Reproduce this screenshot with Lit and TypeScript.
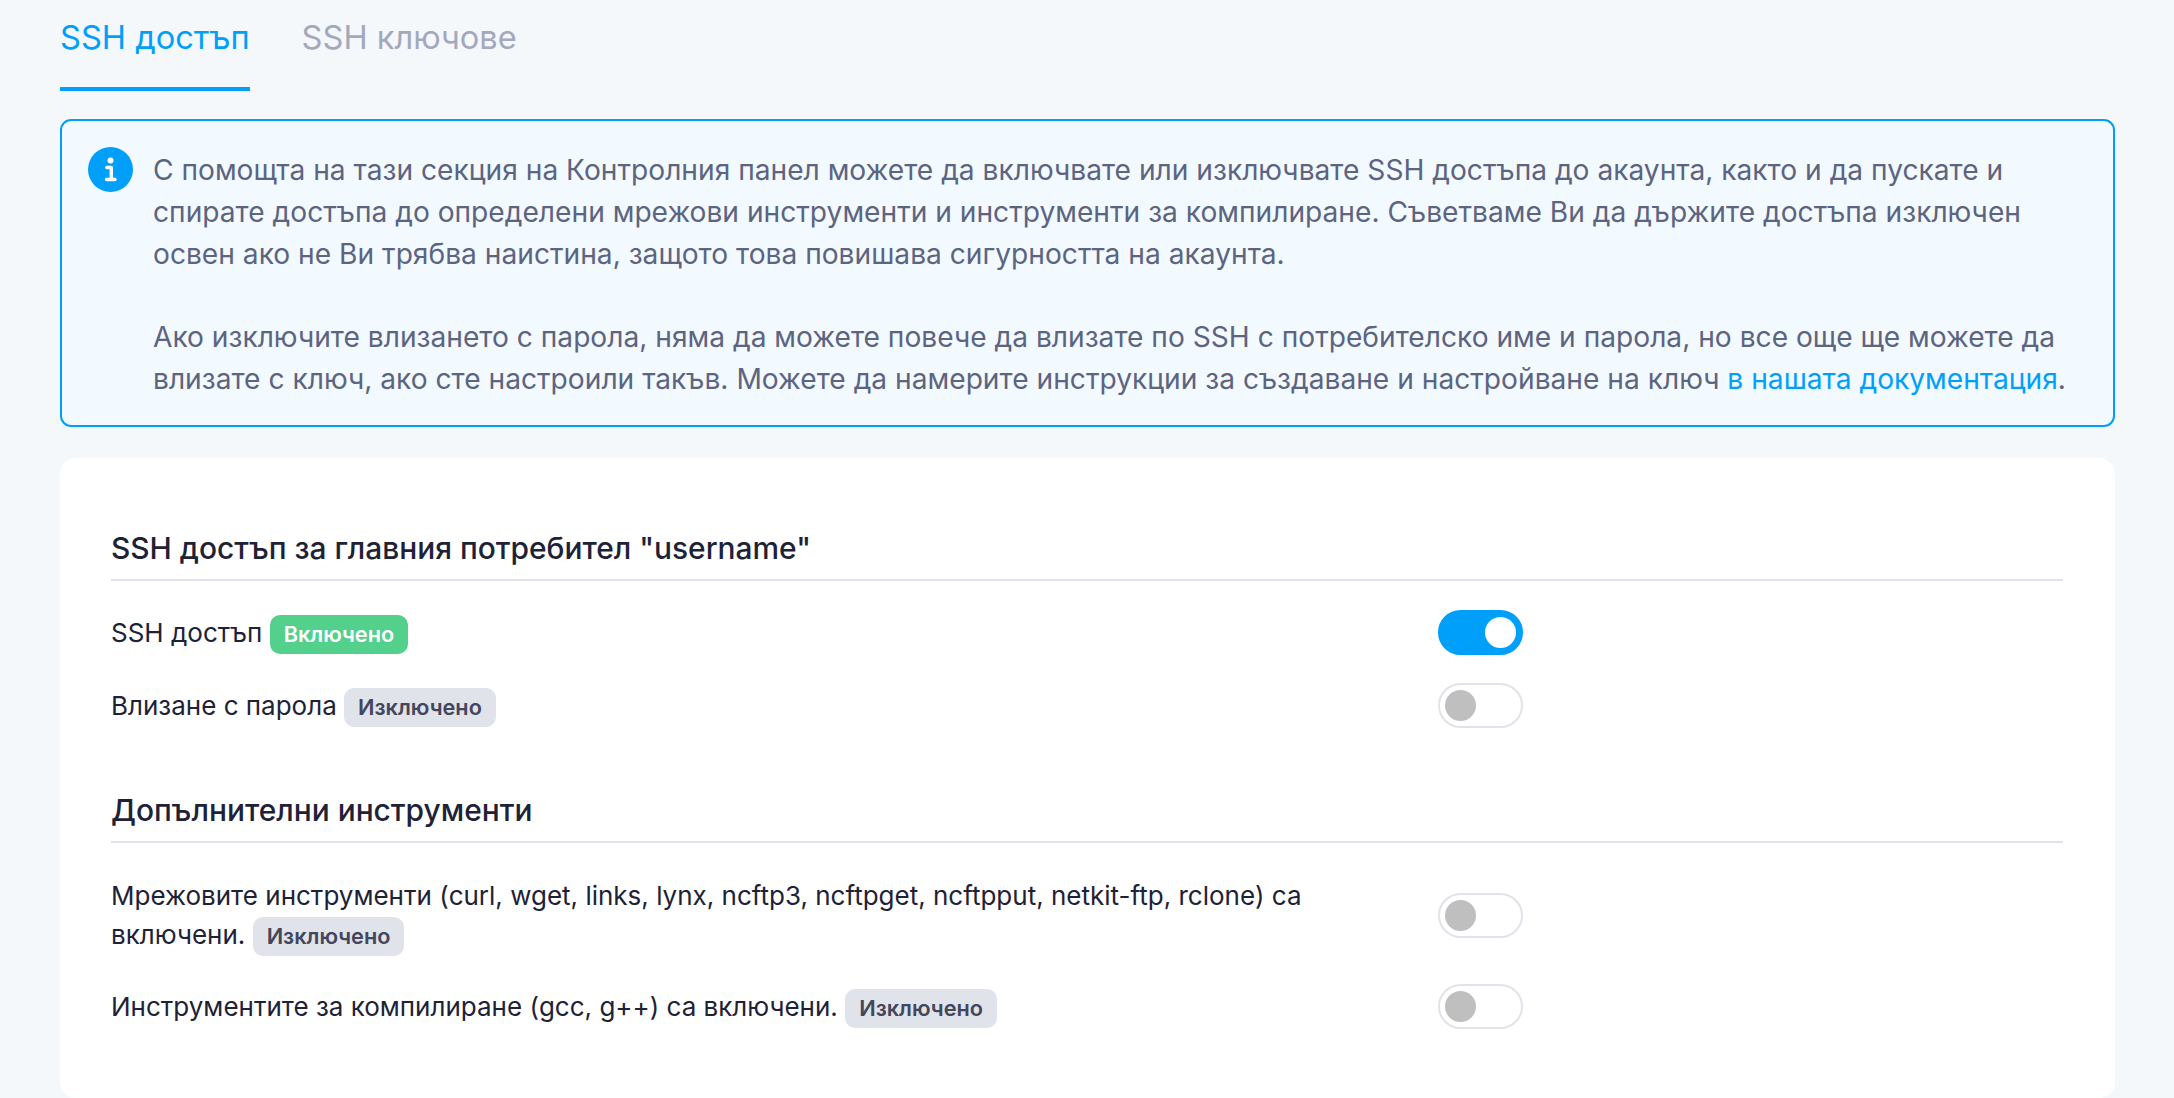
import { LitElement, html, css } from 'lit';
import { customElement, property } from 'lit/decorators.js';

@customElement('status-badge')
class StatusBadge extends LitElement {
  @property({ type: Boolean }) on = false;

  static styles = css`
    :host {
      display: inline-block;
      vertical-align: baseline;
    }

    .badge {
      display: inline-block;
      height: 39px;
      line-height: 39px;
      padding: 0 14px;
      border-radius: 10px;
      font-size: 21.7px;
      font-weight: 600;
      background: #e0e3ea;
      color: #44465c;
    }

    .badge.on {
      background: #52d08c;
      color: #fff;
    }
  `;

  render() {
    return html`<span class="badge ${this.on ? 'on' : ''}">${this.on ? 'Включено' : 'Изключено'}</span>`;
  }
}

@customElement('toggle-switch')
class ToggleSwitch extends LitElement {
  @property({ type: Boolean }) on = false;

  static styles = css`
    :host {
      display: block;
      margin-top: -2px;
    }

    .track {
      box-sizing: border-box;
      display: flex;
      align-items: center;
      width: 85px;
      height: 45px;
      padding: 0 5px;
      border: 2px solid #e0e3ea;
      border-radius: 23px;
      background: #fff;
    }

    .knob {
      width: 31px;
      height: 31px;
      border-radius: 50%;
      background: #bfbfbf;
    }

    .track.on {
      justify-content: flex-end;
      border-color: #00a0fa;
      background: #00a0fa;
    }

    .track.on .knob {
      background: #fff;
    }
  `;

  render() {
    return html`<div class="track ${this.on ? 'on' : ''}"><div class="knob"></div></div>`;
  }
}

@customElement('app-root')
export class AppRoot extends LitElement {
  static styles = css`
    :host {
      display: block;
      height: 1098px;
      overflow: hidden;
      box-sizing: border-box;
      padding: 0 59px 0 60px;
      background: #f4f8fb;
      font-family: Inter, "Liberation Sans", sans-serif;
      color: #1e2237;
    }

    .tabs {
      display: flex;
      gap: 52px;
      height: 91px;
      font-size: 32.6px;
    }

    .tab {
      box-sizing: border-box;
      height: 91px;
      padding-top: 17px;
      line-height: 40px;
      color: #a4a8bd;
    }

    .tab.active {
      color: #00a0fa;
      border-bottom: 4px solid #00a0fa;
    }

    .alert {
      box-sizing: border-box;
      display: flex;
      gap: 20px;
      height: 308px;
      margin-top: 28px;
      padding: 28px 28px 0 26px;
      border: 2px solid #00a0fa;
      border-radius: 11px;
      background: #f2f9ff;
      color: #5c6480;
      font-size: 28.17px;
      line-height: 42px;
    }

    .alert svg {
      flex: none;
      width: 45px;
      height: 45px;
      margin-top: -2px;
    }

    .alert p {
      margin: 0 0 41px;
    }

    .alert p:last-child {
      margin: 0;
    }

    .alert a {
      color: #00a0fa;
      text-decoration: none;
    }

    .card {
      box-sizing: border-box;
      height: 640px;
      margin-top: 31px;
      padding: 69px 52px 0 51px;
      border-radius: 16px;
      background: #fff;
    }

    h2 {
      margin: 0;
      padding-bottom: 10px;
      border-bottom: 2px solid #dfe2e8;
      font-size: 29.9px;
      font-weight: 500;
      line-height: 42px;
    }

    .section {
      margin-bottom: 61px;
    }

    .rows {
      display: flex;
      flex-direction: column;
      gap: 30px;
      margin-top: 31px;
    }

    .section + .section .rows {
      margin-top: 33px;
    }

    .row {
      display: grid;
      grid-template-columns: 1327px 1fr;
      align-items: center;
    }

    .label {
      padding-right: 20px;
      font-size: 26px;
      line-height: 39px;
    }
  `;

  private renderRow(label: string, enabled: boolean) {
    return html`
      <div class="row">
        <div class="label">${label} <status-badge ?on=${enabled}></status-badge></div>
        <toggle-switch ?on=${enabled}></toggle-switch>
      </div>
    `;
  }

  render() {
    return html`
      <div class="tabs">
        <div class="tab active">SSH достъп</div>
        <div class="tab">SSH ключове</div>
      </div>

      <div class="alert">
        <svg viewBox="0 0 45 45">
          <circle cx="22.5" cy="22.5" r="22.5" fill="#00a0fa"></circle>
          <circle cx="22.5" cy="13.5" r="3" fill="#fff"></circle>
          <path
            d="M18.8 20.5h4.5v11.5M18.5 32.5h8.5"
            fill="none"
            stroke="#fff"
            stroke-width="3.4"
            stroke-linecap="round"
            stroke-linejoin="round"
          ></path>
        </svg>
        <div>
          <p>
            С помощта на тази секция на Контролния панел можете да включвате или изключвате SSH достъпа до акаунта,
            както и да пускате и спирате достъпа до определени мрежови инструменти и инструменти за компилиране.
            Съветваме Ви да държите достъпа изключен освен ако не Ви трябва наистина, защото това повишава сигурността
            на акаунта.
          </p>
          <p>
            Ако изключите влизането с парола, няма да можете повече да влизате по SSH с потребителско име и парола, но
            все още ще можете да влизате с ключ, ако сте настроили такъв. Можете да намерите инструкции за създаване и
            настройване на ключ <a href="#">в нашата документация</a>.
          </p>
        </div>
      </div>

      <div class="card">
        <div class="section">
          <h2>SSH достъп за главния потребител "username"</h2>
          <div class="rows">
            ${this.renderRow('SSH достъп', true)}
            ${this.renderRow('Влизане с парола', false)}
          </div>
        </div>
        <div class="section">
          <h2>Допълнителни инструменти</h2>
          <div class="rows">
            ${this.renderRow('Мрежовите инструменти (curl, wget, links, lynx, ncftp3, ncftpget, ncftpput, netkit-ftp, rclone) са включени.', false)}
            ${this.renderRow('Инструментите за компилиране (gcc, g++) са включени.', false)}
          </div>
        </div>
      </div>
    `;
  }
}
